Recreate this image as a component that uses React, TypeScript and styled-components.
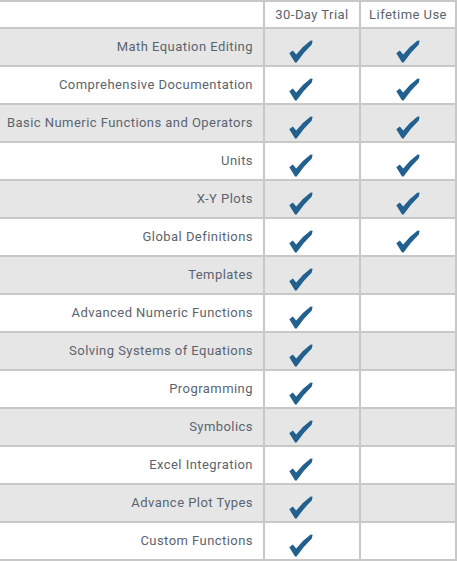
import React from "react";
import styled, { createGlobalStyle } from "styled-components";

const GlobalStyle = createGlobalStyle`
  html, body {
    margin: 0;
    padding: 0;
    background: #ffffff;
  }
  body {
    font-family: Roboto, "Liberation Sans", sans-serif;
  }
`;

const BORDER = "#c8c8c8";

const Table = styled.div`
  width: 457px;
  border-top: 2px solid ${BORDER};
  box-sizing: border-box;
`;

const Row = styled.div<{ $shade?: boolean; $header?: boolean }>`
  display: grid;
  grid-template-columns: 265px 96px 96px;
  height: ${(p) => (p.$header ? 27 : 38)}px;
  background: ${(p) => (p.$shade ? "#e6e6e6" : "#ffffff")};
`;

const Cell = styled.div`
  box-sizing: border-box;
  border-right: 2px solid ${BORDER};
  border-bottom: 2px solid ${BORDER};
  min-width: 0;
`;

const HeadCell = styled(Cell)`
  display: flex;
  align-items: center;
  justify-content: center;
  font-size: 13px;
  letter-spacing: 0.45px;
  color: #5a6470;
  padding-bottom: 1px;
  white-space: nowrap;
`;

const Label = styled(Cell)`
  display: flex;
  align-items: center;
  justify-content: flex-end;
  padding-right: 10px;
  padding-bottom: 2px;
  font-size: 13px;
  letter-spacing: 0.45px;
  color: #5a6470;
  white-space: nowrap;
`;

const CheckCell = styled(Cell)<{ $trim?: number }>`
  display: flex;
  align-items: flex-start;
  justify-content: center;
  padding-top: 11px;
  padding-right: ${(p) => p.$trim ?? 0}px;
`;

const CheckSvg = styled.svg`
  display: block;
  width: 24px;
  height: 23px;
`;

const Check = () => (
  <CheckSvg viewBox="0 0 24 23" aria-hidden="true">
    <path
      d="M0.3 13.2 L3.8 10.6 L7.2 14.6 Q13.5 6.5 21.6 0.6 L23.6 0.8 L22.8 4.6 Q14.5 12.5 7.6 22.6 L6 22.6 Z"
      fill="#22608f"
    />
  </CheckSvg>
);

const features: { name: string; lifetime: boolean }[] = [
  { name: "Math Equation Editing", lifetime: true },
  { name: "Comprehensive Documentation", lifetime: true },
  { name: "Basic Numeric Functions and Operators", lifetime: true },
  { name: "Units", lifetime: true },
  { name: "X-Y Plots", lifetime: true },
  { name: "Global Definitions", lifetime: true },
  { name: "Templates", lifetime: false },
  { name: "Advanced Numeric Functions", lifetime: false },
  { name: "Solving Systems of Equations", lifetime: false },
  { name: "Programming", lifetime: false },
  { name: "Symbolics", lifetime: false },
  { name: "Excel Integration", lifetime: false },
  { name: "Advance Plot Types", lifetime: false },
  { name: "Custom Functions", lifetime: false },
];

export default function App() {
  return (
    <>
      <GlobalStyle />
      <Table>
        <Row $header>
          <HeadCell />
          <HeadCell>30-Day Trial</HeadCell>
          <HeadCell>Lifetime Use</HeadCell>
        </Row>
        {features.map((f, i) => (
          <Row key={f.name} $shade={i % 2 === 0}>
            <Label>{f.name}</Label>
            <CheckCell $trim={22}>
              <Check />
            </CheckCell>
            <CheckCell>{f.lifetime ? <Check /> : null}</CheckCell>
          </Row>
        ))}
      </Table>
    </>
  );
}
